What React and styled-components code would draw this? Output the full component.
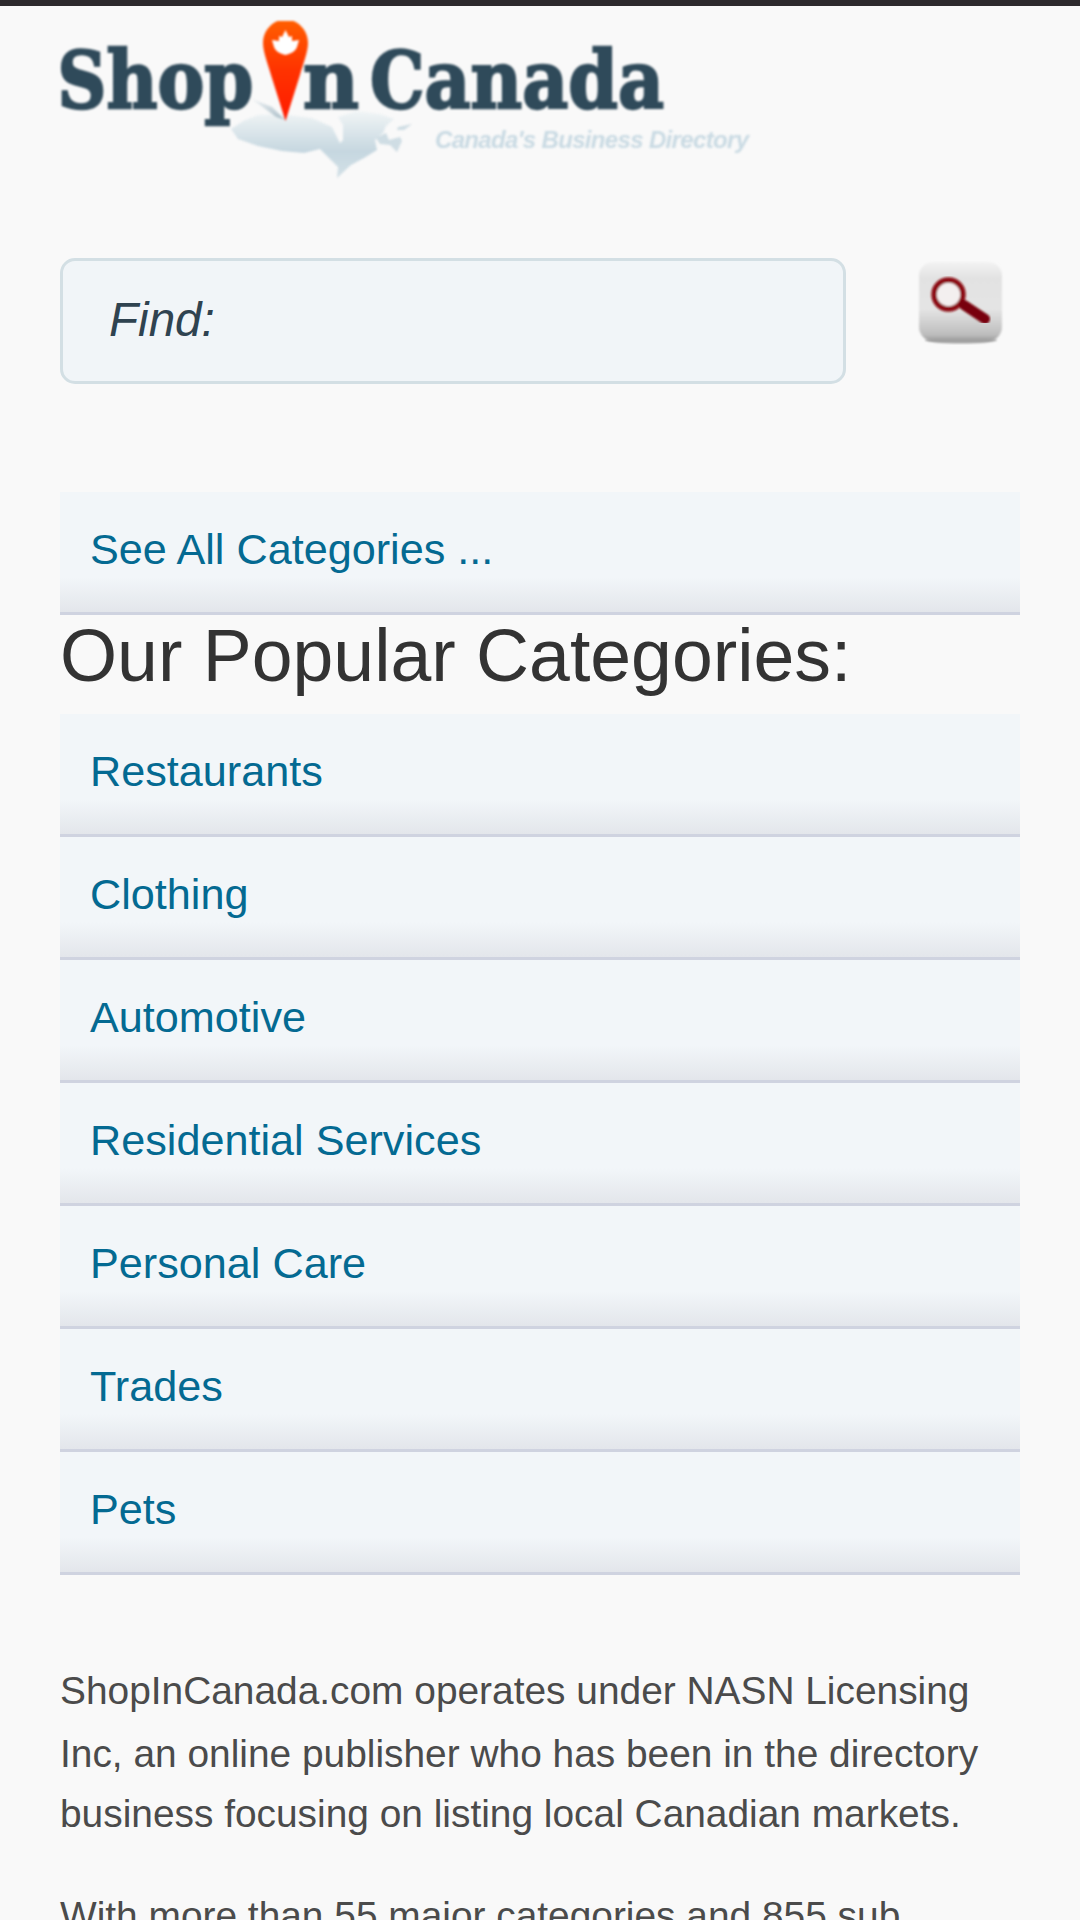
import React, { useState } from "react";
import styled, { createGlobalStyle } from "styled-components";

const GlobalStyle = createGlobalStyle`
  * {
    box-sizing: border-box;
  }

  html, body {
    margin: 0;
    height: 1920px;
    overflow: hidden;
    background: #f9f9f9;
  }

  body {
    font-family: "Liberation Sans", Arial, sans-serif;
  }
`;

const Page = styled.div`
  height: 1920px;
  overflow: hidden;
  border-top: 6px solid #2d2a2d;
  padding: 0 60px;
`;

const Header = styled.header`
  height: 252px;
  padding-top: 15px;
`;

const LogoSvg = styled.svg`
  display: block;
  margin-left: -10px;
  filter: blur(0.9px);
`;

const SearchForm = styled.form`
  display: flex;
  align-items: flex-start;
  gap: 70px;
  height: 234px;
`;

const SearchInput = styled.input`
  width: 786px;
  height: 126px;
  padding: 0 46px 3px;
  border: 3px solid #d3dfe4;
  border-radius: 15px;
  background: #f1f5f8;
  color: #2f4350;
  font-family: inherit;
  font-size: 47.6px;
  font-style: italic;
  outline: none;

  &::placeholder {
    color: #2f4350;
    opacity: 1;
  }
`;

const SearchButton = styled.button`
  width: 90px;
  height: 90px;
  padding: 0;
  border: none;
  background: none;
  cursor: pointer;
`;

const CategoryList = styled.ul`
  margin: 0;
  padding: 0;
  list-style: none;
`;

const CategoryLink = styled.a`
  display: block;
  height: 123px;
  padding-left: 30px;
  border-bottom: 3px solid #cfd3e0;
  background: linear-gradient(to bottom, #f2f6f9 0%, #f2f6f9 71%, #e3e6eb 100%);
  color: #046a92;
  font-size: 43.2px;
  line-height: 115px;
  text-decoration: none;
`;

const Title = styled.h2`
  margin: 0;
  height: 99px;
  color: #333333;
  font-size: 73.4px;
  font-weight: normal;
  line-height: 82px;
  white-space: nowrap;
`;

const About = styled.div`
  padding-top: 84px;
  color: #4b4b4b;
  font-size: 38.86px;
  white-space: nowrap;
`;

const Paragraph = styled.p`
  margin: 0 0 41px;
`;

const Line = styled.span`
  display: block;
  height: ${(props) => props.$height || 61}px;
  line-height: 63px;
`;

const Logo = () => (
  <LogoSvg width="710" height="170" viewBox="50 21 710 170" role="img" aria-label="Shop In Canada">
    <defs>
      <linearGradient id="pin" x1="0" y1="0" x2="0" y2="1">
        <stop offset="0" stopColor="#ff6000" />
        <stop offset="0.5" stopColor="#ff3300" />
        <stop offset="1" stopColor="#ff1a00" />
      </linearGradient>
      <linearGradient id="land" x1="0" y1="0" x2="0" y2="1">
        <stop offset="0" stopColor="#f1f5f6" />
        <stop offset="0.6" stopColor="#c6d7e0" />
        <stop offset="1" stopColor="#d3e1e7" />
      </linearGradient>
      <linearGradient id="shade" x1="0" y1="0" x2="1" y2="0.6">
        <stop offset="0" stopColor="#eef2f4" />
        <stop offset="1" stopColor="#b4c5ce" />
      </linearGradient>
    </defs>
    <path
      fill="url(#land)"
      d="M231 129 L243 121 L258 115 L280 114 L312 118 L332 127 L340 143 L343 140 L343 125 L338 117 L356 111 L380 114 L394 119 L386 126 L383 133 L375 140 L377 150 L364 158 L351 165 L337 178 L338 167 L329 158 L320 149 L304 153 L282 151 L258 146 L238 139 Z"
    />
    <path fill="#cfdde4" d="M376 138 L386 133 L389 140 L400 137 L402 141 L397 152 L390 145 L380 144 Z M398 127 L412 124 L404 130 L397 130 Z" />
    <path fill="url(#shade)" d="M252 99 L272 107 L285 120 L276 117 Z" />
    <g
      fill="#2f4a5a"
      stroke="#2f4a5a"
      strokeWidth="2.400"
      fontFamily="DejaVu Serif"
      fontWeight="bold"
      fontSize="81"
    >
      <text x="57.500" y="108" textLength="196" lengthAdjust="spacingAndGlyphs">
        <tspan fontSize="78">S</tspan>hop
      </text>
      <text x="303" y="108" textLength="56" lengthAdjust="spacingAndGlyphs">n</text>
      <text x="370" y="108" textLength="294" lengthAdjust="spacingAndGlyphs">
        <tspan fontSize="78">C</tspan>anada
      </text>
    </g>
    <path fill="url(#pin)" d="M285.500 19 C273 20 263 30 263 43 C263 52 268 64 271 75 L285.500 121 L300 75 C303 64 308 52 308 43 C308 30 298 20 285.500 19 Z" />
    <path
      fill="#ffffff"
      d="M285.500 30 L289 37 L292 36 L292 41 L299 40 L297 47 C295 52 290 54 285.500 55 C281 54 276 52 274 47 L272 40 L279 41 L279 36 L282 37 Z"
    />
    <text
      x="435"
      y="148"
      fill="#c9dae3"
      fontFamily="Liberation Sans"
      fontSize="24"
      fontWeight="bold"
      fontStyle="italic"
      textLength="314"
    >
      Canada's Business Directory
    </text>
  </LogoSvg>
);

const SearchIcon = () => (
  <svg width="90" height="90" viewBox="916 258 90 90">
    <defs>
      <linearGradient id="key" x1="0" y1="0" x2="0" y2="1">
        <stop offset="0" stopColor="#f3f3f3" />
        <stop offset="0.2" stopColor="#e2e2e2" />
        <stop offset="0.6" stopColor="#e4e4e4" />
        <stop offset="0.92" stopColor="#bdbdbd" />
        <stop offset="1" stopColor="#999999" />
      </linearGradient>
      <filter id="soft" x="-10%" y="-10%" width="120%" height="120%">
        <feGaussianBlur stdDeviation="1.3" />
      </filter>
      <filter id="softer" x="-10%" y="-10%" width="120%" height="120%">
        <feGaussianBlur stdDeviation="0.8" />
      </filter>
    </defs>
    <ellipse cx="961" cy="340" rx="36" ry="3.500" fill="#a5a5a5" filter="url(#soft)" />
    <rect x="919" y="262" width="83" height="79" rx="14" fill="url(#key)" filter="url(#soft)" />
    <g filter="url(#softer)">
      <circle cx="948.500" cy="294.500" r="14.500" fill="#f3efef" stroke="#8d1013" strokeWidth="5.500" />
      <path d="M964 305 L985 319" stroke="#780508" strokeWidth="10" strokeLinecap="round" />
    </g>
  </svg>
);

const categories = [
  "Restaurants",
  "Clothing",
  "Automotive",
  "Residential Services",
  "Personal Care",
  "Trades",
  "Pets",
];

const App = () => {
  const [query, setQuery] = useState("");

  return (
    <Page>
      <GlobalStyle />
      <Header>
        <Logo />
      </Header>

      <SearchForm onSubmit={(e) => e.preventDefault()}>
        <SearchInput
          placeholder="Find:"
          value={query}
          onChange={(e) => setQuery(e.target.value)}
        />
        <SearchButton type="submit" aria-label="Search">
          <SearchIcon />
        </SearchButton>
      </SearchForm>

      <CategoryLink href="#all">See All Categories ...</CategoryLink>
      <Title>Our Popular Categories:</Title>
      <CategoryList>
        {categories.map((name) => (
          <li key={name}>
            <CategoryLink href="#category">{name}</CategoryLink>
          </li>
        ))}
      </CategoryList>

      <About>
        <Paragraph>
          <Line $height={63}>ShopInCanada.com operates under NASN Licensing</Line>
          <Line $height={60}>Inc, an online publisher who has been in the directory</Line>
          <Line>business focusing on listing local Canadian markets.</Line>
        </Paragraph>
        <Paragraph>
          <Line>With more than 55 major categories and 855 sub</Line>
        </Paragraph>
      </About>
    </Page>
  );
};

export default App;
